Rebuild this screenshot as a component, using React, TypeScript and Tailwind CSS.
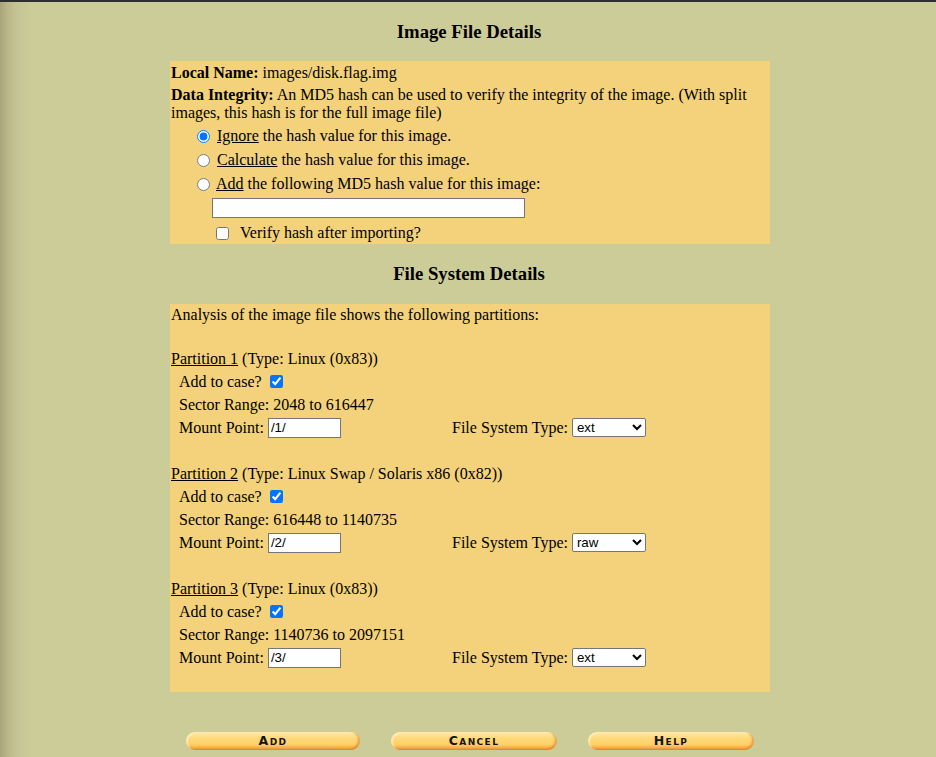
import React from "react";

const serif = { fontFamily: '"Liberation Serif", "Times New Roman", serif' };

function Btn({ label, w }: { label: string; w: string }) {
  return (
    <div
      className={`${w} h-[18px] rounded-full flex items-center justify-center text-[12.5px] font-bold text-[#141414] tracking-[1.4px]`}
      style={{
        fontFamily: '"DejaVu Sans", "Liberation Sans", Arial, sans-serif',
        fontVariant: "small-caps",
        background:
          "linear-gradient(to bottom, #ffe9a6 0%, #ffd97a 35%, #ffcf66 70%, #f5a544 92%, #e98f2e 100%)",
        boxShadow: "inset -2px -1px 2px rgba(214,120,30,0.55), inset 2px 1px 1px rgba(255,245,210,0.6)",
      }}
    >
      {label}
    </div>
  );
}

function Partition({ n, type, range, mount, fs }: { n: number; type: string; range: string; mount: string; fs: string }) {
  return (
    <>
      <div className="h-[23px] flex items-center pl-[1px]">
        <span className="underline">Partition {n}</span>&nbsp;(Type: {type})
      </div>
      <div className="h-[23px] flex items-center pl-[9px]">
        Add to case?
        <input type="checkbox" defaultChecked className="ml-[8px] w-[13px] h-[13px] m-0" />
      </div>
      <div className="h-[23px] flex items-center pl-[9px]">Sector Range: {range}</div>
      <div className="h-[23px] flex items-center pl-[9px]">
        <div className="w-[273px] flex items-center">
          Mount Point:
          <input
            type="text"
            defaultValue={mount}
            className="ml-[4px] w-[73px] h-[20px] border border-[#767676] bg-white px-[2px] text-[13.33px] text-black"
            style={{ fontFamily: '"Liberation Sans", Arial, sans-serif' }}
          />
        </div>
        <div className="flex items-center">
          File System Type:
          <select
            defaultValue={fs}
            className="ml-[4px] w-[74px] h-[19px] border border-[#767676] rounded-[2px] bg-white text-[13.33px] text-black"
            style={{ fontFamily: '"Liberation Sans", Arial, sans-serif' }}
          >
            <option value="ext">ext</option>
            <option value="raw">raw</option>
            <option value="fat">fat</option>
            <option value="ntfs">ntfs</option>
          </select>
        </div>
      </div>
    </>
  );
}

export default function App() {
  return (
    <div
      className="min-h-[757px] w-full border-t-2 border-[#2e2e2e] text-[16px] text-black"
      style={{
        ...serif,
        background: "linear-gradient(to right, #a8a57b 0px, #bab88b 8px, #c6c595 18px, #cccc99 32px, #cccc99 100%)",
      }}
    >
      <div className="w-[600px] ml-[170px] flex flex-col">
        <h3 className="mt-[19px] mb-[18px] h-[22px] leading-[22px] text-center text-[18.72px] font-bold -translate-x-[1px]">Image File Details</h3>

        <div className="bg-[#f3d27b] flex flex-col">
          <div className="h-[23px] pt-[1px] flex items-center pl-[1px]">
            <b>Local Name:</b>&nbsp;images/disk.flag.img
          </div>
          <div className="py-[2px] leading-[18px] pl-[1px] pr-[4px]">
            <b>Data Integrity:</b> An MD5 hash can be used to verify the integrity of the image. (With split images, this hash is for the full image file)
          </div>
          <div className="h-[24px] flex items-center pl-[27px]">
            <input type="radio" name="hash" defaultChecked className="w-[13px] h-[13px] m-0 mr-[7px]" />
            <span><span className="underline">Ignore</span> the hash value for this image.</span>
          </div>
          <div className="h-[24px] flex items-center pl-[27px]">
            <input type="radio" name="hash" className="w-[13px] h-[13px] m-0 mr-[7px]" />
            <span><span className="underline">Calculate</span> the hash value for this image.</span>
          </div>
          <div className="h-[24px] flex items-center pl-[27px]">
            <input type="radio" name="hash" className="w-[13px] h-[13px] m-0 mr-[6px]" />
            <span><span className="underline">Add</span> the following MD5 hash value for this image:</span>
          </div>
          <div className="h-[24px] flex items-center pl-[42px]">
            <input type="text" className="w-[313px] h-[20px] border border-[#767676] bg-white" />
          </div>
          <div className="h-[24px] pt-[2px] flex items-center pl-[46px]">
            <input type="checkbox" className="w-[13px] h-[13px] m-0 mr-[11px]" />
            Verify hash after importing?
          </div>
        </div>

        <h3 className="mt-[19px] mb-[19px] h-[22px] leading-[22px] text-center text-[18.72px] font-bold -translate-x-[1px]">File System Details</h3>

        <div className="bg-[#f3d27b] flex flex-col pb-[23px]">
          <div className="h-[21px] pt-[1px] flex items-center pl-[1px]">Analysis of the image file shows the following partitions:</div>
          <div className="h-[22px]" />
          <Partition n={1} type="Linux (0x83)" range="2048 to 616447" mount="/1/" fs="ext" />
          <div className="h-[23px]" />
          <Partition n={2} type="Linux Swap / Solaris x86 (0x82)" range="616448 to 1140735" mount="/2/" fs="raw" />
          <div className="h-[23px]" />
          <Partition n={3} type="Linux (0x83)" range="1140736 to 2097151" mount="/3/" fs="ext" />
        </div>

        <div className="mt-[40px] flex justify-center gap-[31px]">
          <Btn label="Add" w="w-[174px]" />
          <Btn label="Cancel" w="w-[166px]" />
          <Btn label="Help" w="w-[166px]" />
        </div>
      </div>
    </div>
  );
}
